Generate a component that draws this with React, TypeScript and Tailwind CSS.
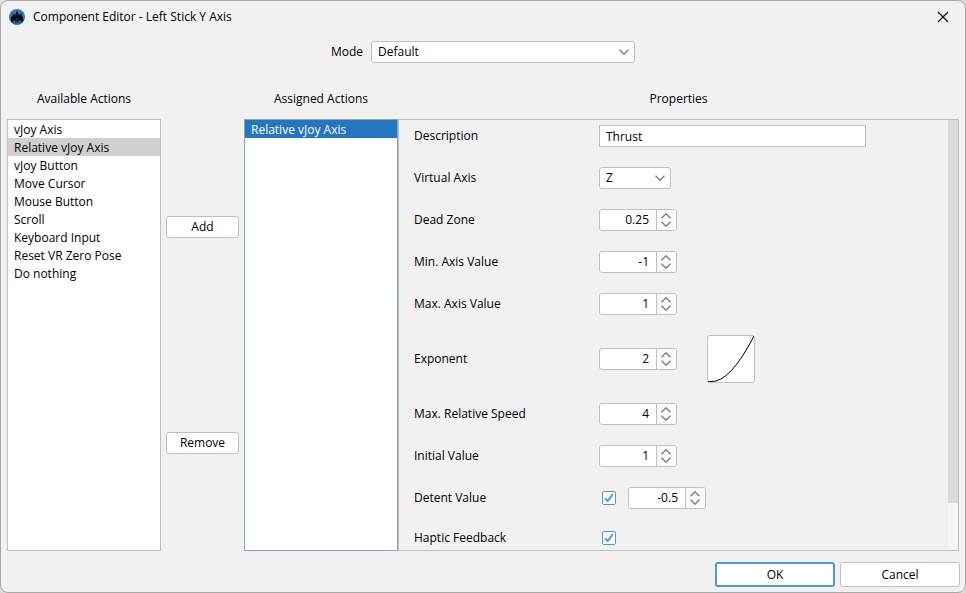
import { useState, type ReactNode, type UIEvent } from "react";

const availableActions = [
  "vJoy Axis",
  "Relative vJoy Axis",
  "vJoy Button",
  "Move Cursor",
  "Mouse Button",
  "Scroll",
  "Keyboard Input",
  "Reset VR Zero Pose",
  "Do nothing",
];

function AppLogo() {
  return (
    <svg viewBox="0 0 16 16" className="size-4 shrink-0" aria-hidden="true">
      <circle cx="8" cy="8" r="8" fill="#3474c0" />
      <path d="M2.500 12.500h11a8 8 0 0 1-11 0z" fill="#1f4f8c" />
      <path
        d="M7.200 2.500h1.600v2.300h1V6h1.400V4.500h1.300V7l1.200.8.6 3.400-1 1.600-1.300-.3-.6-1.300H9.700v1.200H6.300v-1.200H4.600L4 12.500l-1.300.3-1-1.600.6-3.400L3.500 7V4.500h1.300V6h1.400V4.800h1z"
        fill="#05080e"
      />
      <path d="M7.200 9.200h.7v2.200h-.7zM8.500 9.200h.6v1h-.6z" fill="#2c5f9c" />
    </svg>
  );
}

function Chevron({ up = false }: { up?: boolean }) {
  return (
    <svg viewBox="0 0 10 6" className="h-1.5 w-2.5" fill="none" stroke="#757575" strokeWidth="1.2" aria-hidden="true">
      <path d={up ? "M.5 5.250 5 .75l4.500 4.500" : "M.5.75 5 5.250 9.500.75"} />
    </svg>
  );
}

function Dropdown({ id, options, width }: { id: string; options: string[]; width: string }) {
  return (
    <div className={`grid items-center ${width}`}>
      <select
        id={id}
        className="col-start-1 row-start-1 h-[22px] w-full appearance-none rounded-[3px] border border-[#c0c0c0] bg-white pl-1.5 pr-6 outline-none"
      >
        {options.map((o) => (
          <option key={o}>{o}</option>
        ))}
      </select>
      <span className="pointer-events-none col-start-1 row-start-1 mr-1.5 justify-self-end">
        <Chevron />
      </span>
    </div>
  );
}

function SpinBox({ id, initial, step, label }: { id: string; initial: number; step: number; label?: string }) {
  const [value, setValue] = useState(String(initial));
  const change = (by: number) => setValue((v) => String(Math.round((Number(v) + by) * 100) / 100));
  return (
    <div className="flex h-[22px] w-[78px] overflow-hidden rounded-[3px] border border-[#c0c0c0] bg-white">
      <input
        id={id}
        aria-label={label}
        value={value}
        onChange={(e) => setValue(e.target.value)}
        className="min-w-0 flex-1 pr-[7px] text-right outline-none"
      />
      <div className="flex w-5 flex-col items-start justify-center gap-0.5 border-l border-[#c0c0c0] bg-[#fbfbfb] pl-1">
        <button type="button" aria-label="Increase" className="block" onClick={() => change(step)}>
          <Chevron up />
        </button>
        <button type="button" aria-label="Decrease" className="block" onClick={() => change(-step)}>
          <Chevron />
        </button>
      </div>
    </div>
  );
}

function CheckBox({ id }: { id: string }) {
  return (
    <span className="ml-[3px] grid size-3.5">
      <input
        id={id}
        type="checkbox"
        defaultChecked
        className="peer col-start-1 row-start-1 size-3.5 appearance-none rounded-[2px] border border-[#4a9be4] bg-white"
      />
      <svg
        viewBox="0 0 14 14"
        className="pointer-events-none invisible col-start-1 row-start-1 size-3.5 peer-checked:visible"
        fill="none"
        stroke="#4a9be4"
        strokeWidth="2"
        aria-hidden="true"
      >
        <path d="M3.200 7.200 5.800 10 10.800 3.200" />
      </svg>
    </span>
  );
}

function Row({ label, htmlFor, children }: { label: string; htmlFor: string; children: ReactNode }) {
  return (
    <div className="flex items-center">
      <label htmlFor={htmlFor} className="w-[185px] shrink-0">
        {label}
      </label>
      {children}
    </div>
  );
}

function Properties() {
  const [progress, setProgress] = useState(0);
  const onScroll = (e: UIEvent<HTMLDivElement>) => {
    const el = e.currentTarget;
    setProgress(el.scrollTop / Math.max(1, el.scrollHeight - el.clientHeight));
  };
  return (
    <div className="flex min-h-0 border border-[#c0c0c0]">
      <div onScroll={onScroll} className="min-w-0 flex-1 overflow-y-auto pb-14 pl-[15px] pt-[5px] [scrollbar-width:none]">
        <div className="flex flex-col gap-5">
          <Row label="Description" htmlFor="description">
            <input
              id="description"
              defaultValue="Thrust"
              className="h-[22px] w-[267px] border border-[#c0c0c0] bg-white px-1.5 outline-none"
            />
          </Row>
          <Row label="Virtual Axis" htmlFor="axis">
            <Dropdown id="axis" options={["Z", "X", "Y"]} width="w-[72px]" />
          </Row>
          <Row label="Dead Zone" htmlFor="dead-zone">
            <SpinBox id="dead-zone" initial={0.25} step={0.05} />
          </Row>
          <Row label="Min. Axis Value" htmlFor="min-axis">
            <SpinBox id="min-axis" initial={-1} step={0.1} />
          </Row>
          <Row label="Max. Axis Value" htmlFor="max-axis">
            <SpinBox id="max-axis" initial={1} step={0.1} />
          </Row>
          <Row label="Exponent" htmlFor="exponent">
            <SpinBox id="exponent" initial={2} step={1} />
            <div className="ml-[30px] size-12 rounded-[3px] border border-[#c0c0c0] bg-white">
              <svg viewBox="0 0 46 46" className="size-full" fill="none" stroke="#000" aria-label="Response curve">
                <path d="M0 45.500H3Q22 46.500 46 0" />
              </svg>
            </div>
          </Row>
          <Row label="Max. Relative Speed" htmlFor="max-speed">
            <SpinBox id="max-speed" initial={4} step={1} />
          </Row>
          <Row label="Initial Value" htmlFor="initial-value">
            <SpinBox id="initial-value" initial={1} step={0.1} />
          </Row>
          <Row label="Detent Value" htmlFor="detent">
            <CheckBox id="detent" />
            <div className="ml-3">
              <SpinBox id="detent-value" label="Detent value" initial={-0.5} step={0.1} />
            </div>
          </Row>
          <Row label="Haptic Feedback" htmlFor="haptic">
            <CheckBox id="haptic" />
          </Row>
        </div>
      </div>
      <div className="w-2.5 bg-[#f5f5f5]">
        <div className="h-[89%] bg-[#dadada]" style={{ transform: `translateY(${progress * 12.36}%)` }} />
      </div>
    </div>
  );
}

export default function App() {
  const [selected, setSelected] = useState("Relative vJoy Axis");
  const push = "h-[22px] rounded-[3px] border border-[#c0c0c0] bg-white";
  const item = "flex-1 px-1.5 pt-0.5 text-left leading-4";
  return (
    <div className="h-screen bg-[#dcdcdc] font-['Open_Sans','Noto_Sans',sans-serif] text-[12px] leading-[18px] text-black">
      <main className="flex h-full flex-col rounded-lg border border-[#a8a8a8] bg-[#f1f1f1]">
        <header className="flex h-8 shrink-0 items-center gap-2 pl-2 pr-[15px]">
          <AppLogo />
          <h1 className="flex-1">Component Editor - Left Stick Y Axis</h1>
          <button type="button" aria-label="Close" className="p-px">
            <svg viewBox="0 0 12 12" className="size-3" stroke="#111" strokeWidth="1.2" aria-hidden="true">
              <path d="M1 1 11 11M11 1 1 11" />
            </svg>
          </button>
        </header>

        <div className="mt-2 flex shrink-0 items-center justify-center gap-2">
          <label htmlFor="mode">Mode</label>
          <Dropdown id="mode" options={["Default"]} width="w-[264px]" />
        </div>

        <div className="mt-4 grid min-h-0 flex-1 grid-cols-[154px_83px_154px_1fr] grid-rows-[40px_minmax(0,1fr)] px-1.5">
          <h2 className="self-center text-center">Available Actions</h2>
          <h2 className="col-start-3 self-center text-center">Assigned Actions</h2>
          <h2 className="self-center text-center">Properties</h2>

          <ul className="overflow-y-auto border border-[#c0c0c0] bg-white">
            {availableActions.map((action) => (
              <li key={action} className="flex">
                <button
                  type="button"
                  onClick={() => setSelected(action)}
                  className={`${item} ${action === selected ? "bg-[#d0d0d0]" : ""}`}
                >
                  {action}
                </button>
              </li>
            ))}
          </ul>
          <div className="flex flex-col justify-around px-[5px]">
            <button type="button" className={push}>
              Add
            </button>
            <button type="button" className={push}>
              Remove
            </button>
          </div>
          <ul className="border border-[#7ba7d4] bg-white">
            <li className="flex">
              <button type="button" className={`${item} bg-[#2675bf] text-white`}>
                Relative vJoy Axis
              </button>
            </li>
          </ul>
          <Properties />
        </div>

        <footer className="flex shrink-0 justify-end gap-[5px] px-[5px] pb-[5px] pt-[11px]">
          <button type="button" className="h-[25px] w-[120px] rounded-[3px] border-2 border-[#4a9be4] bg-white">
            OK
          </button>
          <button type="button" className="h-[25px] w-[120px] rounded-[3px] border border-[#c0c0c0] bg-white">
            Cancel
          </button>
        </footer>
      </main>
    </div>
  );
}
